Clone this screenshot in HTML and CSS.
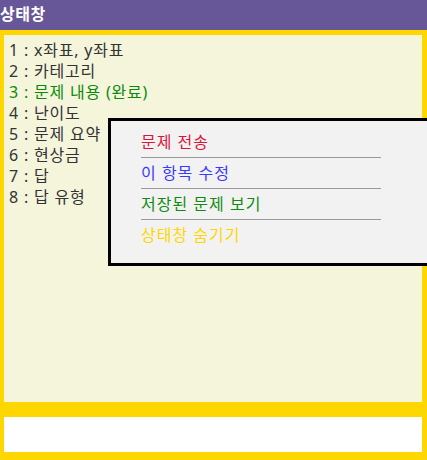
FILE: index.html
```html
<!DOCTYPE html>
<html lang="ko">
<head>
<meta charset="utf-8">
<title>상태창</title>
<link rel="stylesheet" href="styles.css">
</head>
<body>
<header class="title">상태창</header>
<main class="frame">
  <section class="status">
    <ol class="fields">
      <li>1 : x좌표, y좌표</li>
      <li>2 : 카테고리</li>
      <li class="done">3 : 문제 내용 (완료)</li>
      <li>4 : 난이도</li>
      <li>5 : 문제 요약</li>
      <li>6 : 현상금</li>
      <li>7 : 답</li>
      <li>8 : 답 유형</li>
    </ol>
    <div class="menu">
      <ul class="menu-list">
        <li class="send">문제 전송</li>
        <li class="edit">이 항목 수정</li>
        <li class="saved">저장된 문제 보기</li>
        <li class="hide">상태창 숨기기</li>
      </ul>
    </div>
  </section>
  <section class="input"></section>
</main>
</body>
</html>
```
FILE: styles.css
```css
html, body {
  margin: 0;
  padding: 0;
}
body {
  width: 427px;
  height: 460px;
  background: #ffd700;
  font-family: "Noto Sans", "Noto Sans CJK KR", sans-serif;
  font-size: 16px;
  overflow: hidden;
}
.title {
  height: 30px;
  background: #675798;
  color: #ffffff;
  font-weight: bold;
  font-size: 16px;
  line-height: 28px;
  letter-spacing: 0.5px;
  padding: 0;
}
.frame {
  display: flex;
  flex-direction: column;
  gap: 15px;
  padding: 5px 5px 8px 4px;
}
.status {
  position: relative;
  height: 357px;
  background: #f5f5dc;
  padding: 5px 5px;
}
.fields {
  list-style: none;
  margin: 0;
  padding: 0;
  color: #333333;
  line-height: 21px;
  letter-spacing: 0.8px;
}
.fields li {
  height: 21px;
}
.fields .done {
  color: #0a8a0a;
}
.input {
  height: 35px;
  background: #ffffff;
}
.menu {
  position: absolute;
  left: 104px;
  top: 83px;
  width: 300px;
  height: 142px;
  border: 3px solid #000000;
  background: #f2f2f2;
  padding-left: 30px;
  box-sizing: content-box;
}
.menu-list {
  list-style: none;
  margin: 6px 0 0 0;
  padding: 0;
  width: 240px;
  letter-spacing: 1px;
}
.menu-list li {
  line-height: 22px;
  padding: 4px 0;
  border-bottom: 1px solid #999999;
}
.menu-list li:last-child {
  border-bottom: none;
}
.menu-list .send { color: #dc143c; }
.menu-list .edit { color: #3a3aff; }
.menu-list .saved { color: #118a11; }
.menu-list .hide { color: #ffd700; }
```
